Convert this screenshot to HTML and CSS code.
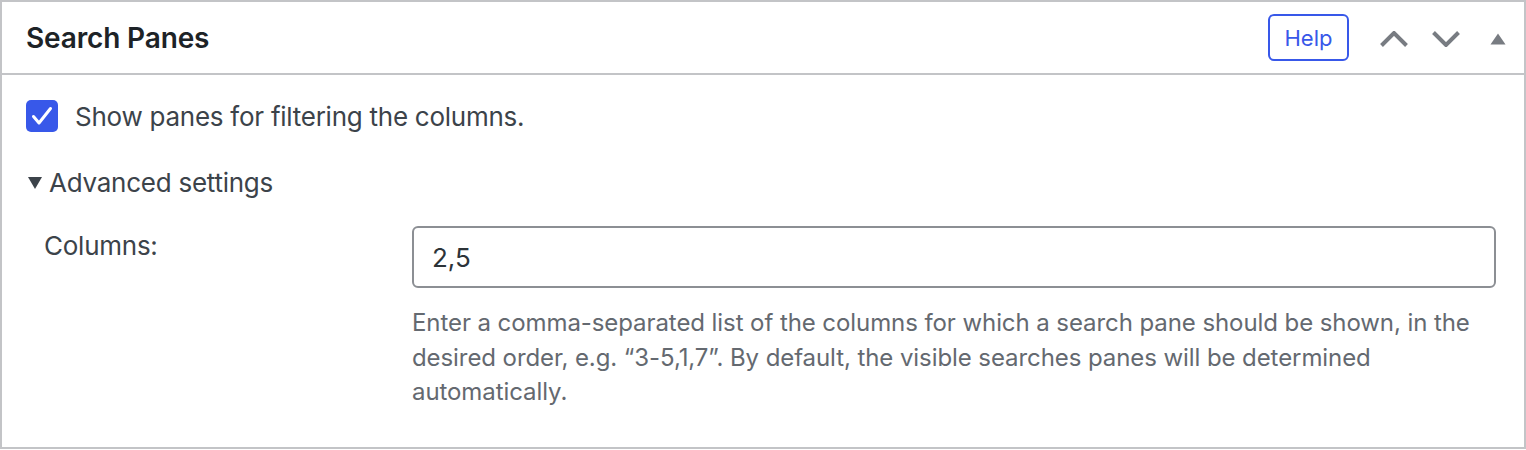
FILE: index.html
```html
<!DOCTYPE html>
<html>
    <head>
        <link rel="stylesheet" href="styles.css">
    </head>
<body>
<div class="postbox">
    <div class="postbox-header">
        <h2 class="hndle">Search Panes</h2>
        <div class="handle-actions">
            <button class="help-btn">Help</button>
            <button class="handle-btn">
                <svg width="28" height="16" viewBox="0 0 28 16"><polyline points="1.5,14.5 14,2 26.5,14.5" /></svg>
            </button>
            <button class="handle-btn">
                <svg width="28" height="16" viewBox="0 0 28 16"><polyline points="1.5,1.5 14,14 26.5,1.5" /></svg>
            </button>
            <button class="handle-btn">
                <svg class="toggle-indicator" width="16" height="12" viewBox="0 0 16 12"><polygon points="0.5,11.5 8,0.5 15.5,11.5" /></svg>
            </button>
        </div>
    </div>
    <div class="inside">
        <label class="check-row">
            <span class="checkbox">
                <svg width="32" height="32" viewBox="0 0 32 32"><polyline points="7.5,16.5 13,23 24.5,8.5" /></svg>
            </span>
            Show panes for filtering the columns.
        </label>
        <div class="advanced-toggle">
            <svg width="14" height="12" viewBox="0 0 14 12"><polygon points="0,0 14,0 7,12" /></svg>
            Advanced settings
        </div>
        <div class="field-row">
            <label class="field-label" for="columns">Columns:</label>
            <div class="field-control">
                <input type="text" id="columns" class="text-input" value="2,5">
                <p class="description">Enter a comma-separated list of the columns for which a search pane should be shown, in the desired order, e.g. “3-5,1,7”. By default, the visible searches panes will be determined automatically.</p>
            </div>
        </div>
    </div>
</div>
</body>
</html>
```

FILE: styles.css
```css
:root {
    --border: #c3c4c7;
    --wp-blue: #3858e9;
    --text: #3c434a;
    --muted: #646970;
    --icon: #787c82;
}

body {
    margin: 0;
    font-family: 'Inter', 'Liberation Sans', sans-serif;
    color: var(--text);
    background: #fff;
}

.postbox {
    height: 449px;
    box-sizing: border-box;
    border: 2px solid var(--border);
}

.postbox-header {
    display: flex;
    align-items: center;
    justify-content: space-between;
    height: 71px;
    padding-left: 24px;
    border-bottom: 2px solid var(--border);
}

.hndle {
    margin: 0;
    font-size: 28px;
    font-weight: 600;
    letter-spacing: -0.15px;
    color: #1d2327;
}

.handle-actions {
    display: flex;
    align-items: center;
}

.help-btn {
    width: 81px;
    height: 47px;
    margin-right: 19px;
    border: 2px solid var(--wp-blue);
    border-radius: 6px;
    background: #fff;
    color: var(--wp-blue);
    font-family: inherit;
    font-size: 22px;
}

.handle-btn {
    display: flex;
    align-items: center;
    justify-content: center;
    width: 52px;
    height: 52px;
    padding: 0;
    border: none;
    background: none;
}

.handle-btn svg {
    margin-top: 3px;
    fill: none;
    stroke: var(--icon);
    stroke-width: 4;
}

.handle-btn .toggle-indicator {
    fill: var(--icon);
    stroke: none;
}

/* Box content */
.inside {
    padding: 25px 28px 0 24px;
}

.check-row {
    display: flex;
    align-items: center;
    gap: 17px;
    height: 32px;
    font-size: 26px;
    letter-spacing: -0.25px;
}

.checkbox {
    display: flex;
    width: 32px;
    height: 32px;
    border-radius: 5px;
    background: var(--wp-blue);
}

.checkbox svg {
    fill: none;
    stroke: #fff;
    stroke-width: 3;
    stroke-linecap: round;
    stroke-linejoin: round;
}

.advanced-toggle {
    display: flex;
    align-items: center;
    gap: 7px;
    margin-top: 32px;
    padding-left: 2px;
    font-size: 26px;
    line-height: 38px;
    letter-spacing: -0.25px;
}

.advanced-toggle svg {
    fill: var(--text);
}

.field-row {
    display: grid;
    grid-template-columns: 386px 1fr;
    margin-top: 24px;
}

.field-label {
    padding-left: 18px;
    font-size: 26px;
    line-height: 39px;
    letter-spacing: -0.25px;
}

.text-input {
    display: block;
    width: 100%;
    height: 62px;
    box-sizing: border-box;
    padding: 0 18px;
    border: 2px solid #8c8f94;
    border-radius: 6px;
    font-family: inherit;
    font-size: 26px;
    color: #2c3338;
}

.description {
    margin: 18px 0 0;
    font-size: 24px;
    line-height: 34.5px;
    letter-spacing: -0.08px;
    color: var(--muted);
}
```
